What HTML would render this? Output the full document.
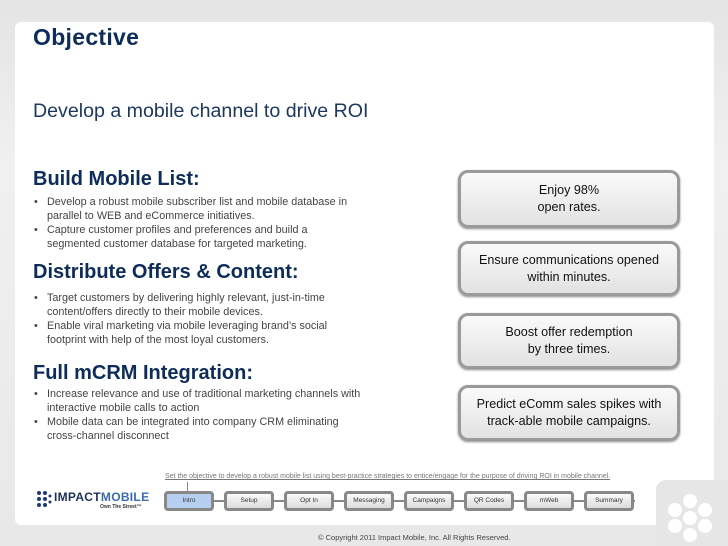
<!DOCTYPE html>
<html><head><meta charset="utf-8"><style>
body{margin:0;width:728px;height:546px;overflow:hidden;background:linear-gradient(#e4e4e4,#f0f0f0 30%,#e8e8e8);font-family:"Liberation Sans",sans-serif;position:relative}
.panel{position:absolute;left:15px;top:22px;width:699px;height:503px;background:#fff;border-radius:6px}
.notch{position:absolute;left:656px;top:480px;width:72px;height:66px;background:#e6e6e6;border-radius:10px 0 0 0}
.abs{position:absolute}
h1{position:absolute;left:33px;top:24px;margin:0;font-size:23px;font-weight:bold;color:#0d2c5a;letter-spacing:0.3px}
.sub{left:33px;top:100px;font-size:19.6px;color:#1d3760}
.h{position:absolute;left:33px;margin:0;font-size:20px;font-weight:bold;color:#0d2c5a}
ul{position:absolute;left:33px;margin:0;padding:0;list-style:none;font-size:10.8px;color:#444;line-height:14px;width:360px;white-space:nowrap}
li{padding-left:14px;position:relative}
li:before{content:"•";position:absolute;left:1px}
.box{position:absolute;left:458px;width:222px;border:3px solid #9a9a9a;border-radius:10px;background:linear-gradient(#fafafa,#e2e2e2);box-shadow:0 1px 2px #888;text-align:center;font-size:12.6px;color:#111;line-height:17px;display:flex;align-items:center;justify-content:center;box-sizing:border-box}
.nav{position:absolute;top:491px;width:50px;height:20px;border:3px solid #888;border-radius:4px;box-sizing:border-box;background:linear-gradient(#fafafa,#dcdcdc);font-size:6.5px;text-align:center;line-height:14px;color:#333}
.line{position:absolute;top:500px;height:2px;background:#888}
.dot{position:absolute;width:14px;height:14px;border-radius:50%;background:#fff}
</style></head><body>
<div class="panel"></div><div class="notch"></div>
<h1>Objective</h1>
<div class="abs sub">Develop a mobile channel to drive ROI</div>
<div class="h" style="top:168px">Build Mobile List:</div>
<ul style="top:195px"><li>Develop a robust mobile subscriber list and mobile database in<br>parallel to WEB and eCommerce initiatives.</li><li>Capture customer profiles and preferences and build a<br>segmented customer database for targeted marketing.</li></ul>
<div class="h" style="top:261px">Distribute Offers &amp; Content:</div>
<ul style="top:291px"><li>Target customers by delivering highly relevant, just-in-time<br>content/offers directly to their mobile devices.</li><li>Enable viral marketing via mobile leveraging brand’s social<br>footprint with help of the most loyal customers.</li></ul>
<div class="h" style="top:362px">Full mCRM Integration:</div>
<ul style="top:387px"><li>Increase relevance and use of traditional marketing channels with<br>interactive mobile calls to action</li><li>Mobile data can be integrated into company CRM eliminating<br>cross-channel disconnect</li></ul>
<div class="box" style="top:170px;height:58px">Enjoy 98%<br>open rates.</div>
<div class="box" style="top:241px;height:55px">Ensure communications opened<br>within minutes.</div>
<div class="box" style="top:313px;height:56px">Boost offer redemption<br>by three times.</div>
<div class="box" style="top:385px;height:56px">Predict eComm sales spikes with<br>track-able mobile campaigns.</div>
<div class="abs" style="left:165px;top:473px;font-size:7px;color:#777;text-decoration:underline">Set the objective to develop a robust mobile list using best-practice strategies to entice/engage for the purpose of driving ROI in mobile channel.</div>
<div class="abs" style="left:187px;top:482px;width:1px;height:9px;background:#888"></div>
<svg class="abs" style="left:36px;top:490px" width="16" height="20"><g fill="#1d3a7a"><circle cx="3" cy="3" r="2"/><circle cx="3" cy="9" r="2"/><circle cx="3" cy="15" r="2"/><circle cx="9" cy="3" r="2"/><circle cx="9" cy="9" r="2"/><circle cx="9" cy="15" r="2"/><circle cx="14" cy="6" r="1.5"/><circle cx="14" cy="12" r="1.5"/></g></svg>
<div class="abs" style="left:54px;top:490px;font-size:12px;font-weight:bold;color:#1d2f5a;letter-spacing:0.3px">IMPACT<span style="color:#3a6bb0">MOBILE</span></div>
<div class="abs" style="left:100px;top:504px;font-size:5px;color:#333;font-weight:bold">Own The Street™</div>
<div class="line" style="left:165px;width:470px"></div>
<div class="nav" style="left:164px;background:#b6cff0">Intro</div>
<div class="nav" style="left:224px">Setup</div>
<div class="nav" style="left:284px">Opt In</div>
<div class="nav" style="left:344px">Messaging</div>
<div class="nav" style="left:404px">Campaigns</div>
<div class="nav" style="left:464px">QR Codes</div>
<div class="nav" style="left:524px">mWeb</div>
<div class="nav" style="left:584px">Summary</div>
<div class="dot" style="left:683px;top:494px"></div><div class="dot" style="left:668px;top:503px"></div><div class="dot" style="left:698px;top:503px"></div><div class="dot" style="left:683px;top:511px"></div><div class="dot" style="left:668px;top:519px"></div><div class="dot" style="left:698px;top:519px"></div><div class="dot" style="left:683px;top:528px"></div>
<div class="abs" style="left:318px;top:533px;font-size:7.5px;color:#444">© Copyright 2011 Impact Mobile, Inc. All Rights Reserved.</div>
</body></html>
